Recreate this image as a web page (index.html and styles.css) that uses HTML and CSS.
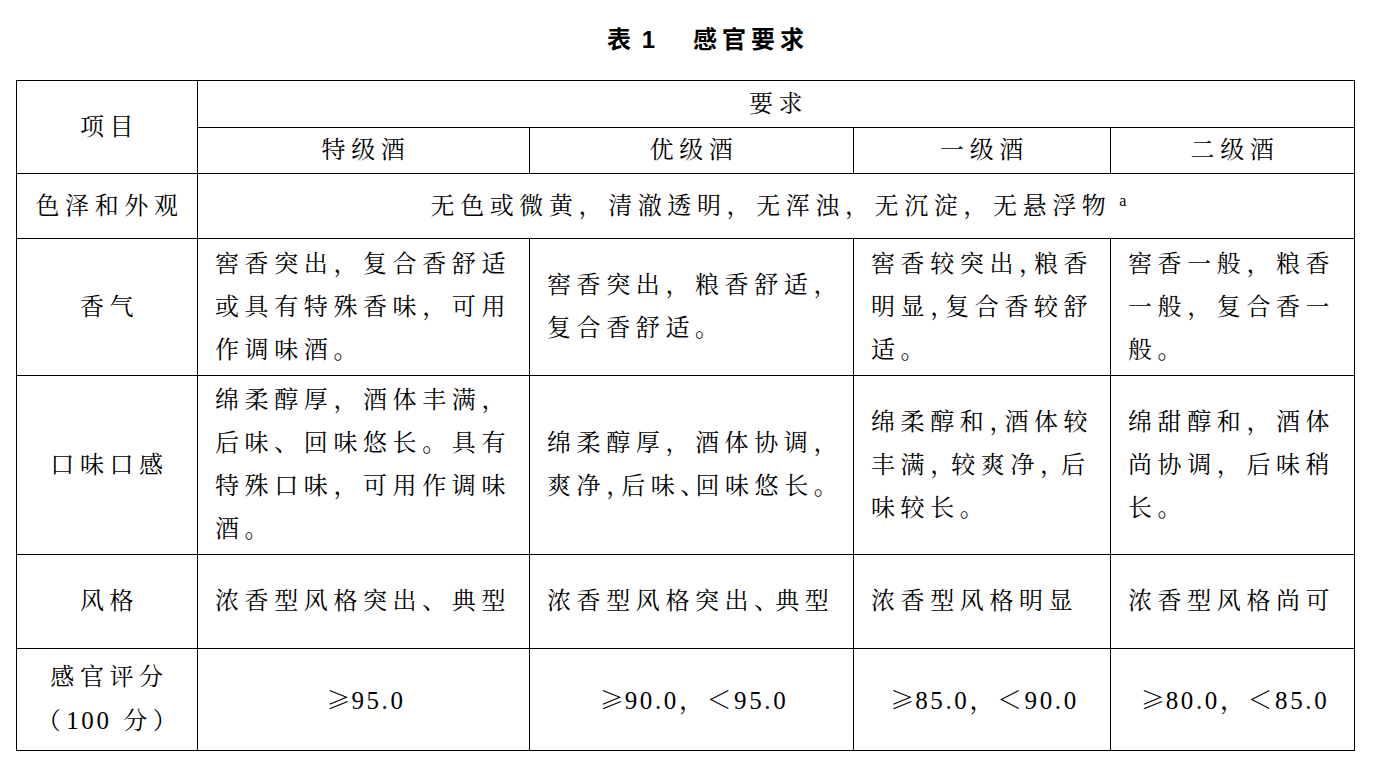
FILE: index.html
```html
<!DOCTYPE html>
<html lang="zh-CN">
<head>
<meta charset="utf-8">
<title>表 1 感官要求</title>
<link rel="stylesheet" href="styles.css">
</head>
<body>
<div class="page">
  <h1 class="title"><span class="t-num">表 1</span><span class="t-name">感官要求</span></h1>
  <table class="spec">
    <colgroup>
      <col class="w1"><col class="w2"><col class="w3"><col class="w4"><col class="w5">
    </colgroup>
    <tr class="r-h1">
      <th rowspan="2" class="c">项目</th>
      <th colspan="4" class="c">要求</th>
    </tr>
    <tr class="r-h2">
      <th class="c">特级酒</th>
      <th class="c">优级酒</th>
      <th class="c">一级酒</th>
      <th class="c">二级酒</th>
    </tr>
    <tr class="r-look">
      <td class="c">色泽和外观</td>
      <td colspan="4" class="c">无色或微黄，清澈透明，无浑浊，无沉淀，无悬浮物<sup class="note">a</sup></td>
    </tr>
    <tr class="r-aroma">
      <td class="c">香气</td>
      <td>窖香突出，复合香舒适<br>或具有特殊香味，可用<br>作调味酒。</td>
      <td>窖香突出，粮香舒适，<br>复合香舒适。</td>
      <td>窖香较突出<span class="h">，</span>粮香<br>明显<span class="h">，</span>复合香较舒<br>适。</td>
      <td>窖香一般，粮香<br>一般，复合香一<br>般。</td>
    </tr>
    <tr class="r-taste">
      <td class="c">口味口感</td>
      <td>绵柔醇厚，酒体丰满，<br>后味、回味悠长。具有<br>特殊口味，可用作调味<br>酒。</td>
      <td>绵柔醇厚，酒体协调，<br>爽净<span class="h">，</span>后味<span class="h">、</span>回味悠长。</td>
      <td>绵柔醇和<span class="h">，</span>酒体较<br>丰满<span class="q">，</span>较爽净<span class="q">，</span>后<br>味较长。</td>
      <td>绵甜醇和，酒体<br>尚协调，后味稍<br>长。</td>
    </tr>
    <tr class="r-style">
      <td class="c">风格</td>
      <td>浓香型风格突出、典型</td>
      <td>浓香型风格突出<span class="q">、</span>典型</td>
      <td>浓香型风格明显</td>
      <td>浓香型风格尚可</td>
    </tr>
    <tr class="r-score">
      <td class="c">感官评分<br>（<span class="num">100</span> 分）</td>
      <td class="c"><span class="num"><span class="sym">≥</span>95.0</span></td>
      <td class="c"><span class="num"><span class="sym">≥</span>90.0，＜95.0</span></td>
      <td class="c"><span class="num"><span class="sym">≥</span>85.0，＜90.0</span></td>
      <td class="c"><span class="num"><span class="sym">≥</span>80.0，＜85.0</span></td>
    </tr>
  </table>
</div>
</body>
</html>
```

FILE: styles.css
```css
html, body {
  margin: 0;
  padding: 0;
  background: #ffffff;
  color: #000000;
}

.page {
  width: 1338px;
  padding-left: 16px;
}

.title {
  margin: 0;
  height: 80px;
  display: flex;
  align-items: center;
  justify-content: center;
  padding-left: 46px;
  box-sizing: border-box;
  font-family: "Liberation Sans", "Noto Sans CJK SC", sans-serif;
  font-size: 24px;
  font-weight: 700;
  letter-spacing: 5px;
  line-height: 1;
}

.t-num {
  word-spacing: -6px;
}

.t-name {
  margin-left: 33px;
}

.spec {
  border-collapse: collapse;
  table-layout: fixed;
  width: 1338px;
  font-family: "Liberation Serif", "Noto Serif CJK SC", "Noto Sans CJK SC", serif;
  font-size: 24px;
  line-height: 43px;
  letter-spacing: 5.6px;
  color: #000000;
}

.w1 { width: 181px; }
.w2 { width: 332px; }
.w3 { width: 324px; }
.w4 { width: 257px; }
.w5 { width: 244px; }

.spec th,
.spec td {
  border: 1px solid #000000;
  padding: 0 0 0 17px;
  vertical-align: middle;
  text-align: left;
  font-weight: 400;
  white-space: nowrap;
}

.spec .c {
  text-align: center;
  padding: 0 0 0 5px;
}

.r-h1 { height: 47px; }
.r-h2 { height: 46px; }
.r-look { height: 65px; }
.r-aroma { height: 137px; }
.r-taste { height: 179px; }
.r-style { height: 94px; }
.r-score { height: 102px; }

.h {
  letter-spacing: -9px;
}

.q {
  letter-spacing: -3px;
}

.num {
  letter-spacing: 2.6px;
  font-size: 25px;
}

.sym {
  font-family: "Noto Serif CJK SC", "Noto Sans CJK SC", serif;
  letter-spacing: 1px;
  font-size: 24px;
}

.note {
  font-size: 16px;
  letter-spacing: 0;
  margin-left: 8px;
  vertical-align: 8px;
  line-height: 0;
}
```
